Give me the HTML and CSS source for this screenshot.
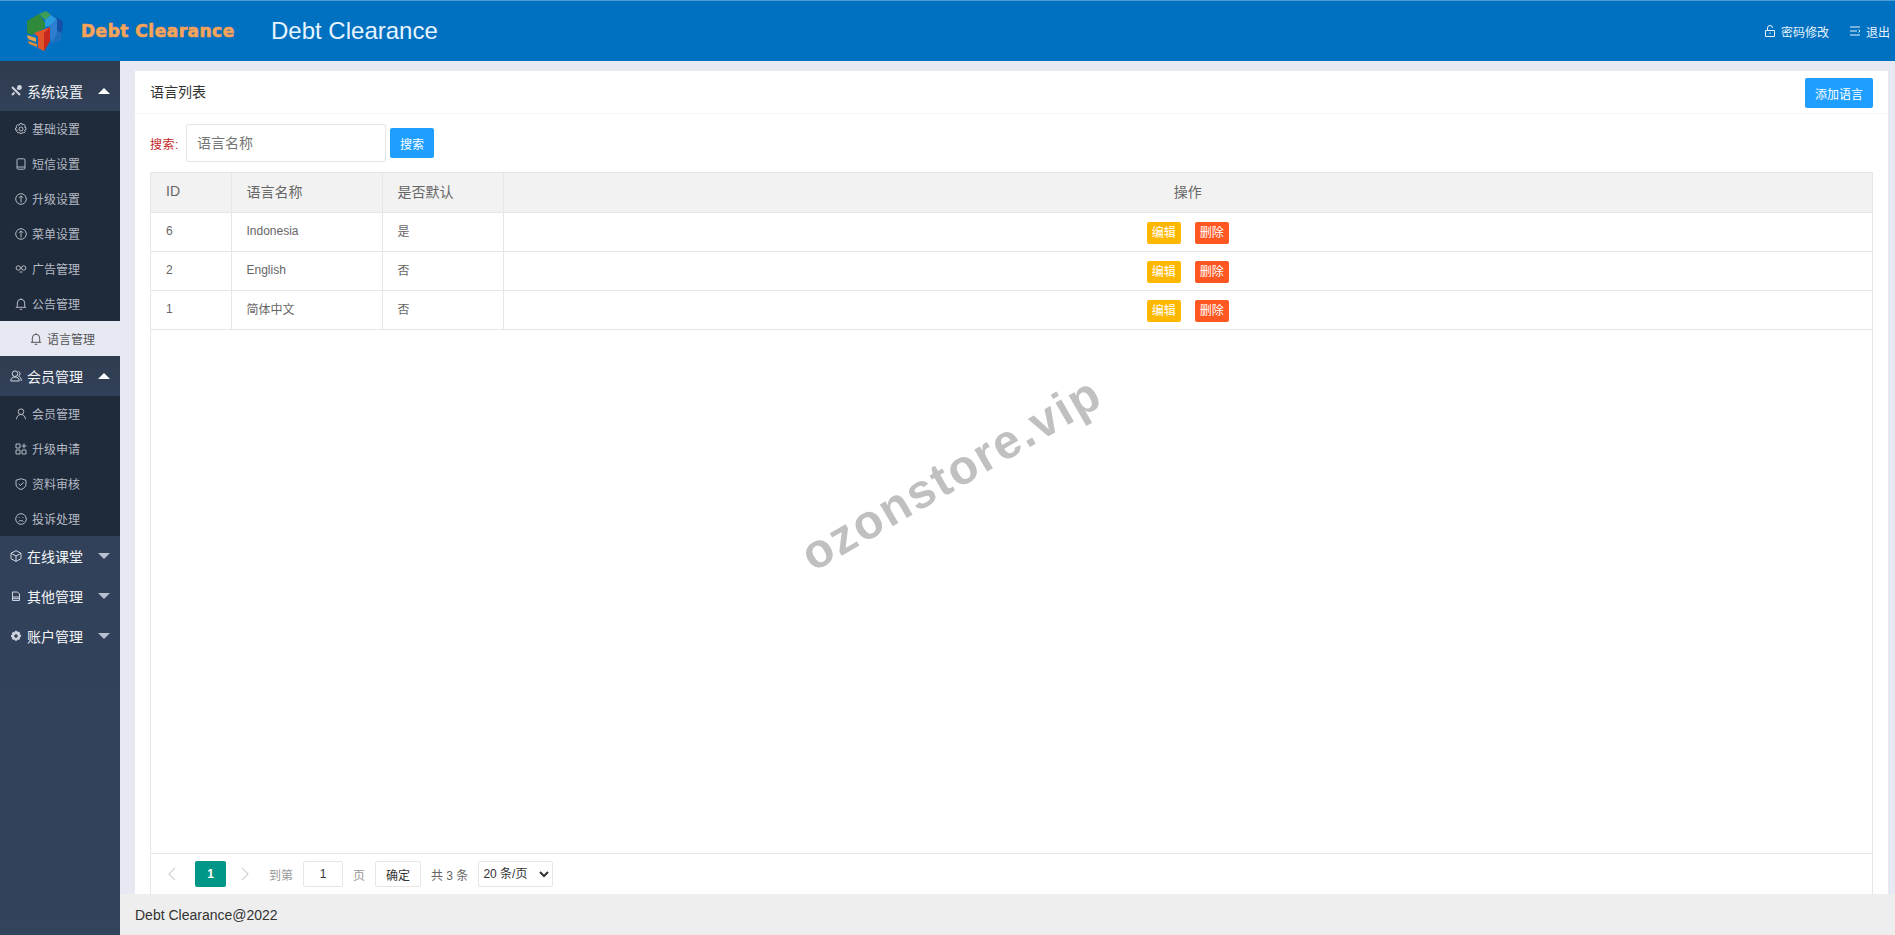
FILE: index.html
```html
<!DOCTYPE html>
<html lang="zh-CN">
<head>
<meta charset="utf-8">
<title>Debt Clearance</title>
<link rel="stylesheet" href="styles.css">
</head>
<body>
<header class="topbar">
  <div class="brand">
    <svg class="cube" viewBox="0 0 38 40" aria-hidden="true">
      <polygon points="1,10 13,3 19,12 19,17 6,24 1,22" fill="#2f8a3c"/>
      <polygon points="13,3 20,0 25,4 19,9" fill="#3f9e55"/>
      <polygon points="19,9 25,4 31,8 24,15 19,16" fill="#2a9bdc"/>
      <polygon points="25,4 37,10 36,22 31,20 31,8" fill="#1450a8"/>
      <polygon points="24,15 31,8 31,24 25,32 24,24" fill="#2f7fd0"/>
      <polygon points="31,20 36,22 35,29 26,33" fill="#2b6fc0" opacity=".7"/>
      <polygon points="1,24 10,27 10,31 2,28" fill="#e8a04a"/>
      <polygon points="2,30 11,33 11,36 3,33" fill="#d88a3a"/>
      <polygon points="8,22 19,18 24,16 24,30 18,40 12,37 12,26" fill="#e0552a"/>
      <polygon points="18,22 24,16 24,30 18,40" fill="#c9281e"/>
    </svg>
    <span class="brand-name">Debt Clearance</span>
  </div>
  <h1 class="app-title">Debt Clearance</h1>
  <nav class="top-actions">
    <a class="top-link">
      <svg class="ic" viewBox="0 0 12 12"><path d="M1.500 5.500h9v6h-9zM3.500 5.500V3a2.500 2.500 0 0 1 5 0M6 7.500v1.500"/></svg>密码修改
    </a>
    <a class="top-link">
      <svg class="ic" viewBox="0 0 12 12"><path d="M1 2h10M1 6h7M1 10h10M9.500 4.500 11 6 9.500 7.500"/></svg>退出
    </a>
  </nav>
</header>

<div class="shell">
  <aside class="sidebar">
    <div class="nav-head open">
      <svg class="ic tools" viewBox="0 0 12 12"><path d="M2 2 10 10M10 1.500 7.300 4.200M4.500 7.500 2 10"/><circle cx="9.500" cy="2.500" r="1.400"/></svg>
      <span class="nav-label">系统设置</span><i class="caret up"></i>
    </div>
    <ul class="nav-sub">
      <li class="nav-item"><svg class="ic" viewBox="0 0 12 12"><circle cx="6" cy="6" r="2"/><path d="M5 .5h2l.4 1.500 1.500-.7 1.400 1.400-.7 1.500 1.400.4v2l-1.400.5.700 1.500-1.400 1.400-1.500-.7-.4 1.200H5l-.4-1.200-1.500.7-1.400-1.400.7-1.500L.5 7V5l1.400-.4-.7-1.500L2.600 1.700l1.500.7z"/></svg>基础设置</li>
      <li class="nav-item"><svg class="ic" viewBox="0 0 12 12"><rect x="2" y=".8" width="8" height="10.400" rx="1.200"/><path d="M2 9h8"/></svg>短信设置</li>
      <li class="nav-item"><svg class="ic" viewBox="0 0 12 12"><circle cx="6" cy="6" r="5.300"/><path d="M6 9.500V3M4 4.800 6 2.800 8 4.800"/></svg>升级设置</li>
      <li class="nav-item"><svg class="ic" viewBox="0 0 12 12"><circle cx="6" cy="6" r="5.300"/><path d="M6 9.500V3M4 4.800 6 2.800 8 4.800"/></svg>菜单设置</li>
      <li class="nav-item"><svg class="ic" viewBox="0 0 12 12"><circle cx="3.300" cy="5" r="2.200"/><circle cx="8.700" cy="5" r="2.200"/><path d="M4.500 9h3"/></svg>广告管理</li>
      <li class="nav-item"><svg class="ic" viewBox="0 0 12 12"><path d="M.8 9.300h10.400M2.300 9.300V5a3.700 3.700 0 0 1 7.400 0v4.300M6 .3v1M4.700 11.300h2.600"/></svg>公告管理</li>
      <li class="nav-item active"><svg class="ic" viewBox="0 0 12 12"><path d="M.8 9.300h10.400M2.300 9.300V5a3.700 3.700 0 0 1 7.400 0v4.300M6 .3v1M4.700 11.300h2.600"/></svg>语言管理</li>
    </ul>
    <div class="nav-head open">
      <svg class="ic" viewBox="0 0 12 12"><circle cx="5" cy="3.700" r="2.800"/><path d="M.8 11c0-2.500 1.500-4 4.200-4s4.200 1.500 4.200 4zM8.500 1.200a2.800 2.800 0 0 1 0 5c1.700.5 2.800 2 2.800 4.800"/></svg>
      <span class="nav-label">会员管理</span><i class="caret up"></i>
    </div>
    <ul class="nav-sub">
      <li class="nav-item"><svg class="ic" viewBox="0 0 12 12"><circle cx="6" cy="3.700" r="2.800"/><path d="M1.500 11.300c.2-3 2-4.800 4.500-4.800s4.300 1.800 4.500 4.800"/></svg>会员管理</li>
      <li class="nav-item"><svg class="ic" viewBox="0 0 12 12"><path d="M1 1h4v4H1zM1 7h4v4H1zM7 7h4v4H7zM9 .5v5M6.500 3h5"/></svg>升级申请</li>
      <li class="nav-item"><svg class="ic" viewBox="0 0 12 12"><path d="M6 .7 11 2.300V6c0 2.800-2 4.500-5 5.500C3 10.500 1 8.800 1 6V2.300zM3.700 5.800 5.500 7.500 8.500 4.300"/></svg>资料审核</li>
      <li class="nav-item"><svg class="ic" viewBox="0 0 12 12"><circle cx="6" cy="6" r="5.300"/><path d="M3.500 8.500C4.500 7.300 7.500 7.300 8.500 8.500M3.700 4.500h.8M7.500 4.500h.8"/></svg>投诉处理</li>
    </ul>
    <div class="nav-head">
      <svg class="ic" viewBox="0 0 12 12"><path d="M6 .6 11 3.300V8.700L6 11.400 1 8.700V3.300zM1 3.300 6 6 11 3.300M6 6v5.400"/></svg>
      <span class="nav-label">在线课堂</span><i class="caret"></i>
    </div>
    <div class="nav-head">
      <svg class="ic" viewBox="0 0 12 12"><path d="M2.500 2h5L9.500 4V10.500h-7zM2.500 7h7M2.500 8.700h7"/></svg>
      <span class="nav-label">其他管理</span><i class="caret"></i>
    </div>
    <div class="nav-head">
      <svg class="ic solid" viewBox="0 0 12 12"><path fill-rule="evenodd" d="M5 .8h2l.4 1.300 1.300-.6 1.500 1.500-.6 1.300 1.300.4v2.200l-1.300.4.600 1.300-1.500 1.500-1.300-.6-.4 1.300H5l-.4-1.300-1.300.6-1.500-1.500.6-1.300L1 7.200V5l1.400-.4-.6-1.300 1.500-1.500 1.300.6zM6 4.300a1.800 1.800 0 1 0 0 3.600 1.800 1.800 0 0 0 0-3.600z"/></svg>
      <span class="nav-label">账户管理</span><i class="caret"></i>
    </div>
  </aside>

  <div class="workspace">
    <main class="card">
      <div class="card-head">
        <span class="card-title">语言列表</span>
        <button class="btn btn-add">添加语言</button>
      </div>
      <div class="card-body">
        <form class="search">
          <label class="search-label">搜索:</label>
          <input class="search-input" placeholder="语言名称">
          <button class="btn btn-search" type="button">搜索</button>
        </form>
        <div class="table-box">
          <table class="grid">
            <colgroup><col class="col-id"><col class="col-name"><col class="col-def"><col></colgroup>
            <thead>
              <tr><th>ID</th><th>语言名称</th><th>是否默认</th><th class="center">操作</th></tr>
            </thead>
            <tbody>
              <tr><td>6</td><td>Indonesia</td><td>是</td><td class="center"><a class="tag tag-edit">编辑</a><a class="tag tag-del">删除</a></td></tr>
              <tr><td>2</td><td>English</td><td>否</td><td class="center"><a class="tag tag-edit">编辑</a><a class="tag tag-del">删除</a></td></tr>
              <tr><td>1</td><td>简体中文</td><td>否</td><td class="center"><a class="tag tag-edit">编辑</a><a class="tag tag-del">删除</a></td></tr>
            </tbody>
          </table>
          <div class="pager">
            <svg class="chev" viewBox="0 0 10 14"><path d="M8 1 2 7l6 6"/></svg>
            <span class="page-on">1</span>
            <svg class="chev chev-next" viewBox="0 0 10 14"><path d="m2 1 6 6-6 6"/></svg>
            <span class="pager-muted goto">到第</span>
            <input class="page-input" value="1">
            <span class="pager-muted">页</span>
            <button class="page-ok" type="button">确定</button>
            <span class="page-total">共 3 条</span>
            <select class="page-size"><option>20 条/页</option></select>
          </div>
        </div>
      </div>
    </main>
    <footer class="footer">Debt Clearance@2022</footer>
  </div>
</div>
<div class="watermark">ozonstore.vip</div>
</body>
</html>
```
FILE: styles.css
```css
* { box-sizing: border-box; }
html, body { margin: 0; height: 935px; overflow: hidden; }
body {
  display: flex;
  flex-direction: column;
  font-family: "Liberation Sans", "Noto Sans CJK SC", sans-serif;
  font-size: 12px;
  color: #666;
  background: #e6e9f2;
  position: relative;
}
ul { list-style: none; margin: 0; padding: 0; }

.topbar {
  height: 61px;
  flex: none;
  display: flex;
  align-items: center;
  background: #0070c0;
  border-top: 1px solid #4d9bd6;
  color: #fff;
}
.brand { display: flex; align-items: center; width: 271px; padding-left: 26px; }
.cube { width: 38px; height: 40px; flex: none; }
.brand-name {
  margin-left: 17px;
  font-family: "DejaVu Sans", sans-serif;
  font-weight: 700;
  font-size: 17px;
  letter-spacing: .5px;
  white-space: nowrap;
  color: #f7a860;
  -webkit-text-stroke: .7px #f29a50;
}
.app-title { margin: 0; font-size: 24px; font-weight: 400; color: #e6f4ff; }
.top-actions { margin-left: auto; display: flex; gap: 20px; padding-right: 5px; }
.top-link { display: flex; align-items: center; gap: 5px; color: #e8f3fb; }
.ic {
  width: 12px;
  height: 12px;
  flex: none;
  fill: none;
  stroke: currentColor;
  stroke-width: 1;
}
.ic.solid { fill: currentColor; stroke: none; }
.ic.tools { stroke-width: 2; }

.shell { flex: 1; display: flex; min-height: 0; }
.sidebar {
  width: 120px;
  flex: none;
  padding-top: 10px;
  background: linear-gradient(#2f3b4d 0, #2f3f56 120px, #33435c 100%);
  color: #fff;
}
.nav-head {
  height: 40px;
  display: flex;
  align-items: center;
  padding-left: 10px;
  font-size: 14px;
  color: #f2f4f7;
}
.nav-head .ic { color: #cfd5de; }
.nav-head.open { background: linear-gradient(#2f3b4e, #32415a); }
.nav-head:first-child { margin-top: -10px; height: 50px; padding-top: 10px; }
.nav-label { margin-left: 5px; width: 71px; white-space: nowrap; }
.caret {
  width: 0;
  height: 0;
  border-left: 6px solid transparent;
  border-right: 6px solid transparent;
  border-top: 6px solid #b7c0ce;
}
.caret.up { border-top: 0; border-bottom: 6px solid #fff; }
.nav-sub { background: #1f2a3a; }
.nav-item {
  height: 35px;
  display: flex;
  align-items: center;
  gap: 5px;
  padding-left: 15px;
  color: #b4bac4;
}
.nav-item.active { background: #e6e9f2; color: #555; padding-left: 30px; }

.workspace { flex: 1; min-width: 0; display: flex; flex-direction: column; }
.card {
  flex: 1;
  min-height: 0;
  margin: 10px 7px 0 15px;
  background: #fff;
  display: flex;
  flex-direction: column;
}
.card-head {
  height: 43px;
  flex: none;
  display: flex;
  align-items: center;
  justify-content: space-between;
  padding: 0 15px;
  border-bottom: 1px solid #f6f6f6;
}
.card-title { font-size: 14px; color: #333; margin-bottom: 2px; }
.btn {
  border: 0;
  border-radius: 2px;
  background: #1e9fff;
  color: #fff;
  font: inherit;
  font-size: 12px;
  padding: 0;
}
.btn-add { width: 68px; height: 30px; margin-top: 2px; }
.card-body {
  flex: 1;
  min-height: 0;
  display: flex;
  flex-direction: column;
  padding: 10px 15px 0;
}
.search { display: flex; align-items: center; height: 38px; margin: 0 0 10px; flex: none; }
.search-label { width: 36px; color: #c21f1f; letter-spacing: .5px; }
.search-input {
  width: 200px;
  height: 38px;
  border: 1px solid #e6e6e6;
  border-radius: 2px;
  padding: 0 10px;
  font: inherit;
  font-size: 14px;
  outline: 0;
}
.search-input::placeholder { color: #757575; }
.btn-search { width: 44px; height: 30px; margin-left: 4px; }

.table-box {
  flex: 1;
  min-height: 0;
  display: flex;
  flex-direction: column;
  border: 1px solid #e6e6e6;
  border-bottom: 0;
}
.grid { width: 100%; table-layout: fixed; border-collapse: collapse; flex: none; }
.col-id { width: 80px; }
.col-name { width: 151px; }
.col-def { width: 121px; }
.grid th, .grid td {
  padding: 0 15px 2px;
  text-align: left;
  font-weight: 400;
  border-bottom: 1px solid #e6e6e6;
  border-right: 1px solid #e6e6e6;
}
.grid th:last-child, .grid td:last-child { border-right: 0; }
.grid th { height: 39px; background: #f2f2f2; font-size: 14px; }
.grid td { height: 39px; }
.grid .center { text-align: center; }
.tag {
  display: inline-block;
  width: 34px;
  height: 22px;
  line-height: 22px;
  margin-top: 4px;
  border-radius: 2px;
  text-align: center;
  color: #fff;
  vertical-align: middle;
}
.tag-edit { background: #ffb800; }
.tag-del { background: #ff5722; margin-left: 14px; }

.pager {
  margin-top: auto;
  height: 41px;
  flex: none;
  display: flex;
  align-items: center;
  padding-left: 16px;
  border-top: 1px solid #e6e6e6;
  color: #666;
}
.chev { width: 10px; height: 14px; fill: none; stroke: #d2d2d2; stroke-width: 1.200; flex: none; }
.chev-next { margin-left: 14px; }
.page-on {
  width: 31px;
  height: 26px;
  margin-left: 18px;
  line-height: 26px;
  text-align: center;
  background: #009688;
  color: #fff;
  border-radius: 2px;
  font-weight: 700;
}
.pager-muted { color: #999; }
.goto { margin-left: 19px; margin-right: 10px; }
.page-input {
  width: 40px;
  height: 26px;
  margin-right: 10px;
  border: 1px solid #e6e6e6;
  border-radius: 2px;
  text-align: center;
  font: inherit;
  color: #333;
  outline: 0;
}
.page-ok {
  width: 46px;
  height: 26px;
  margin-left: 10px;
  background: #fff;
  border: 1px solid #e6e6e6;
  border-radius: 2px;
  font: inherit;
  color: #333;
  padding: 0;
}
.page-total { margin-left: 10px; }
.page-size {
  width: 75px;
  height: 26px;
  margin-left: 10px;
  background: #fff;
  border: 1px solid #e6e6e6;
  border-radius: 2px;
  font: inherit;
  color: #333;
}

.footer {
  height: 41px;
  flex: none;
  display: flex;
  align-items: center;
  padding-left: 15px;
  background: #eee;
  font-size: 14px;
  color: #333;
}

.watermark {
  position: absolute;
  left: 782px;
  top: 446px;
  transform: rotate(-30deg);
  font-size: 48px;
  font-weight: 700;
  letter-spacing: 2px;
  color: #c0c0c0;
  white-space: nowrap;
  pointer-events: none;
}
```
